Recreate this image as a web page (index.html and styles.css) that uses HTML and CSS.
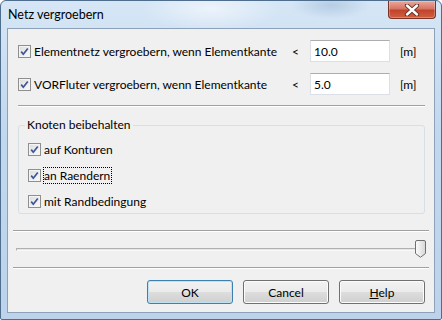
FILE: index.html
```html
<!DOCTYPE html>
<html lang="de">
<head>
    <meta charset="UTF-8">
    <title>Netz vergroebern</title>
    <link rel="stylesheet" href="styles.css">
</head>
<body>
    <div class="window">
        <div class="titlebar">
            <span class="title">Netz vergroebern</span>
            <span class="close">
                <svg width="16" height="12" viewBox="0 0 16 12">
                    <path d="M3 1.5 L13 10.5 M13 1.5 L3 10.5" stroke="#5a2a22" stroke-width="4.2" stroke-linecap="round"/>
                    <path d="M3 1.5 L13 10.5 M13 1.5 L3 10.5" stroke="#ffffff" stroke-width="2.4" stroke-linecap="round"/>
                </svg>
            </span>
        </div>

        <div class="client">
            <div class="row">
                <label class="check">
                    <span class="cb"><svg width="9" height="9" viewBox="0 0 9 9"><path d="M1.2 4.6 L3.3 7.2 L7.8 1.4" fill="none" stroke="#3d5796" stroke-width="1.7"/></svg></span>
                    <span>Elementnetz vergroebern, wenn Elementkante</span>
                </label>
                <span class="lt">&lt;</span>
                <input class="field" type="text" value="10.0">
                <span class="unit">[m]</span>
            </div>
            <div class="row">
                <label class="check">
                    <span class="cb"><svg width="9" height="9" viewBox="0 0 9 9"><path d="M1.2 4.6 L3.3 7.2 L7.8 1.4" fill="none" stroke="#3d5796" stroke-width="1.7"/></svg></span>
                    <span>VORFluter vergroebern, wenn Elementkante</span>
                </label>
                <span class="lt">&lt;</span>
                <input class="field" type="text" value="5.0">
                <span class="unit">[m]</span>
            </div>

            <div class="sep sep-short"></div>

            <fieldset class="group">
                <legend>Knoten beibehalten</legend>
                <label class="check item">
                    <span class="cb"><svg width="9" height="9" viewBox="0 0 9 9"><path d="M1.2 4.6 L3.3 7.2 L7.8 1.4" fill="none" stroke="#3d5796" stroke-width="1.7"/></svg></span>
                    <span>auf Konturen</span>
                </label>
                <label class="check item">
                    <span class="cb"><svg width="9" height="9" viewBox="0 0 9 9"><path d="M1.2 4.6 L3.3 7.2 L7.8 1.4" fill="none" stroke="#3d5796" stroke-width="1.7"/></svg></span>
                    <span class="focus">an Raendern</span>
                </label>
                <label class="check item">
                    <span class="cb"><svg width="9" height="9" viewBox="0 0 9 9"><path d="M1.2 4.6 L3.3 7.2 L7.8 1.4" fill="none" stroke="#3d5796" stroke-width="1.7"/></svg></span>
                    <span>mit Randbedingung</span>
                </label>
            </fieldset>

            <div class="sep sep-wide sep-top"></div>

            <div class="slider">
                <div class="track"></div>
                <svg class="thumb" width="11" height="18" viewBox="0 0 11 18">
                    <defs>
                        <linearGradient id="tg" x1="0" y1="0" x2="1" y2="0">
                            <stop offset="0" stop-color="#fdfdfd"/>
                            <stop offset="1" stop-color="#d6d6d6"/>
                        </linearGradient>
                    </defs>
                    <path d="M0.5 2 Q0.5 0.5 2 0.5 H9 Q10.5 0.5 10.5 2 V13.5 L5.5 17.3 L0.5 13.5 Z" fill="url(#tg)" stroke="#707070"/>
                </svg>
            </div>

            <div class="sep sep-wide"></div>

            <div class="buttons">
                <button class="btn btn-default">OK</button>
                <button class="btn">Cancel</button>
                <button class="btn"><u>H</u>elp</button>
            </div>
        </div>
    </div>
</body>
</html>
```

FILE: styles.css
```css
body {
    margin: 0;
    font-family: Lato, "Noto Sans", sans-serif;
    font-size: 12px;
    color: #000;
}
.window {
    width: 442px;
    height: 320px;
    box-sizing: border-box;
    border: 1px solid #4f6d8c;
    border-radius: 6px 6px 2px 2px;
    background:
        radial-gradient(ellipse 70px 22px at 210px 8px, rgba(255,255,255,0.55), rgba(255,255,255,0)),
        radial-gradient(ellipse 40px 14px at 330px 4px, rgba(150,180,210,0.5), rgba(150,180,210,0)),
        linear-gradient(#d6e6f6, #c2d8ee 40%, #bcd3eb);
    display: flex;
    flex-direction: column;
}
.titlebar {
    height: 27px;
    display: flex;
    justify-content: space-between;
    align-items: flex-start;
    padding: 0 5px 0 7px;
}
.title {
    margin-top: 6px;
    line-height: 16px;
    font-size: 12.5px;
}
.close {
    width: 46px;
    height: 17px;
    border: 1px solid #7b3327;
    border-top: none;
    border-radius: 0 0 4px 4px;
    background: linear-gradient(#e9a99c, #d77561 45%, #c2432d 55%, #d0613f);
    display: flex;
    align-items: center;
    justify-content: center;
    box-shadow: inset 0 0 0 1px rgba(255,255,255,0.25);
}
.client {
    flex: 1;
    margin: 0 6px 6px;
    border: 1px solid #8da2b8;
    background: #f0f0f0;
    display: flex;
    flex-direction: column;
}
.row {
    display: flex;
    align-items: center;
    height: 22px;
    margin-top: 11px;
    padding-left: 10px;
}
.check {
    display: flex;
    align-items: center;
    white-space: nowrap;
}
.row .check {
    width: 274px;
}
.cb {
    width: 11px;
    height: 11px;
    border: 1px solid #8e8f8f;
    background: linear-gradient(135deg, #dcdcdc, #fbfbfb);
    box-shadow: inset 0 0 0 1px #f4f4f4;
    display: flex;
    align-items: center;
    justify-content: center;
    margin-right: 3px;
}
.lt {
    width: 18px;
}
.field {
    width: 80px;
    height: 22px;
    box-sizing: border-box;
    border: 1px solid #dbdfe6;
    border-top-color: #abadb3;
    padding: 0 3px;
    font: inherit;
    background: #fff;
    outline: none;
}
.unit {
    margin-left: 10px;
}
.sep {
    height: 0;
    border-top: 1px solid #a0a0a0;
    border-bottom: 1px solid #fff;
}
.sep-short {
    margin: 10px 9px 0 10px;
}
.sep-wide {
    margin: 0 5px;
}
.sep-top {
    margin-top: 16px;
}
.group {
    margin: 10px 9px 0 10px;
    padding: 8px 6px 4px;
    border: 1px solid #d5dfe5;
    border-radius: 3px;
    min-width: 0;
}
.group legend {
    padding: 0 2px;
    line-height: 16px;
}
.item {
    height: 16px;
    margin-left: 3px;
}
.item + .item {
    margin-top: 10px;
}
.focus {
    outline: 1px dotted #000;
    outline-offset: 0;
    padding: 0 1px 0 0;
}
.slider {
    display: flex;
    align-items: center;
    height: 18px;
    margin: 8px 8px 9px;
}
.track {
    flex: 1;
    height: 1px;
    border-top: 1px solid #b0b0b0;
    border-bottom: 1px solid #f8f8f8;
    border-left: 1px solid #b0b0b0;
    background: #e6e6e6;
}
.thumb {
    margin-left: -3px;
}
.buttons {
    display: flex;
    justify-content: flex-end;
    gap: 10px;
    margin: 11px 9px 0;
}
.btn {
    width: 86px;
    height: 24px;
    border: 1px solid #707070;
    border-radius: 3px;
    background: linear-gradient(#f2f2f2, #ebebeb 48%, #dddddd 52%, #cfcfcf);
    box-shadow: inset 0 0 0 1px #fcfcfc;
    font: inherit;
    color: #000;
    padding: 0;
}
.btn-default {
    border-color: #3c7fb1;
    box-shadow: inset 0 0 0 1px #bde2f5;
}
```
